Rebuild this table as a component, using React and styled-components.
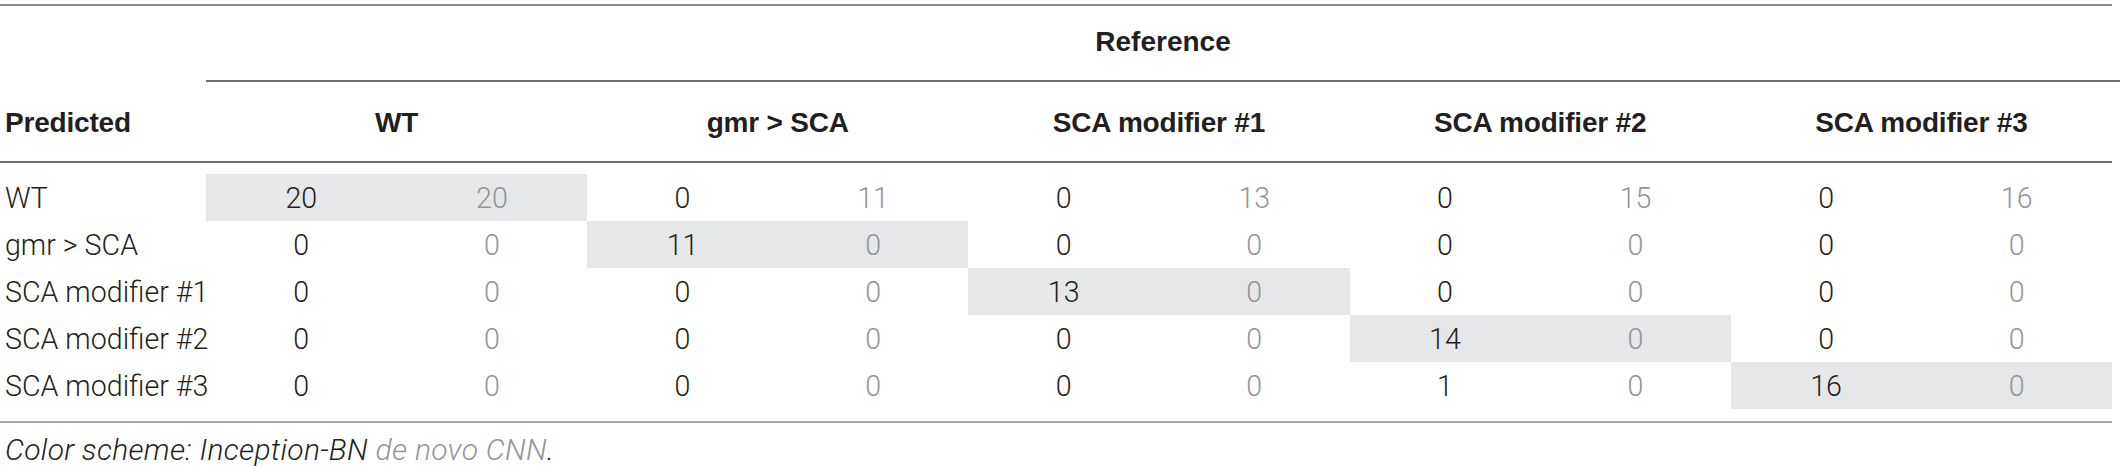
import styled, { createGlobalStyle } from "styled-components";

const GlobalStyle = createGlobalStyle`
  body {
    margin: 0;
    background: #ffffff;
    font-family: "Roboto", "Liberation Sans", sans-serif;
  }
`;

const groups = ["WT", "gmr > SCA", "SCA modifier #1", "SCA modifier #2", "SCA modifier #3"];

const rows = [
  { label: "WT", values: [20, 20, 0, 11, 0, 13, 0, 15, 0, 16] },
  { label: "gmr > SCA", values: [0, 0, 11, 0, 0, 0, 0, 0, 0, 0] },
  { label: "SCA modifier #1", values: [0, 0, 0, 0, 13, 0, 0, 0, 0, 0] },
  { label: "SCA modifier #2", values: [0, 0, 0, 0, 0, 0, 14, 0, 0, 0] },
  { label: "SCA modifier #3", values: [0, 0, 0, 0, 0, 0, 1, 0, 16, 0] },
];

const Page = styled.div`
  padding-top: 4px;
  width: 2112px;
  color: #231f20;
`;

const Table = styled.div`
  border-top: 2px solid #8c8c8c;
  border-bottom: 2px solid #a9a9a9;
`;

const SpanRow = styled.div`
  display: grid;
  grid-template-columns: 206px 1fr;
  height: 76px;
`;

const SpanHead = styled.div`
  display: flex;
  align-items: center;
  justify-content: center;
  margin-right: -8px;
  padding-bottom: 2px;
  border-bottom: 2px solid #6e6e6e;
  font-family: "Liberation Sans", Arial, sans-serif;
  font-weight: 700;
  font-size: 28px;
`;

const HeadRow = styled.div`
  display: grid;
  grid-template-columns: 206px repeat(5, 1fr);
  height: 77px;
  padding-top: 2px;
  border-bottom: 2px solid #6e6e6e;
`;

const HeadCell = styled.div`
  display: flex;
  align-items: center;
  justify-content: ${(p) => (p.$left ? "flex-start" : "center")};
  padding-left: ${(p) => (p.$left ? "5px" : "0")};
  font-family: "Liberation Sans", Arial, sans-serif;
  font-weight: 700;
  font-size: 28px;
  letter-spacing: -0.2px;
`;

const Body = styled.div`
  padding: 11px 0 12px;
`;

const Row = styled.div`
  display: grid;
  grid-template-columns: 206px repeat(10, 1fr);
  height: 47px;
`;

const Label = styled.div`
  display: flex;
  align-items: center;
  padding-left: 5px;
  font-weight: 300;
  font-size: 28.6px;
  white-space: nowrap;
`;

const Cell = styled.div`
  display: flex;
  align-items: center;
  justify-content: center;
  font-weight: 300;
  font-size: 28.6px;
  color: ${(p) => (p.$muted ? "#939598" : "#231f20")};
  background: ${(p) => (p.$hit ? "#e6e7e8" : "transparent")};
`;

const Caption = styled.p`
  margin: 11px 0 0;
  padding-left: 5px;
  line-height: 32px;
  font-size: 30px;
  letter-spacing: 0.3px;
  font-weight: 300;
  font-style: italic;
`;

const Muted = styled.span`
  color: #939598;
`;

export default function App() {
  return (
    <Page>
      <GlobalStyle />
      <Table>
        <SpanRow>
          <div />
          <SpanHead>Reference</SpanHead>
        </SpanRow>
        <HeadRow>
          <HeadCell $left>Predicted</HeadCell>
          {groups.map((g) => (
            <HeadCell key={g}>{g}</HeadCell>
          ))}
        </HeadRow>
        <Body>
          {rows.map((r, i) => (
            <Row key={r.label}>
              <Label>{r.label}</Label>
              {r.values.map((v, j) => (
                <Cell key={j} $muted={j % 2 === 1} $hit={Math.floor(j / 2) === i}>
                  {v}
                </Cell>
              ))}
            </Row>
          ))}
        </Body>
      </Table>
      <Caption>
        Color scheme: Inception-BN <Muted>de novo CNN</Muted>.
      </Caption>
    </Page>
  );
}
